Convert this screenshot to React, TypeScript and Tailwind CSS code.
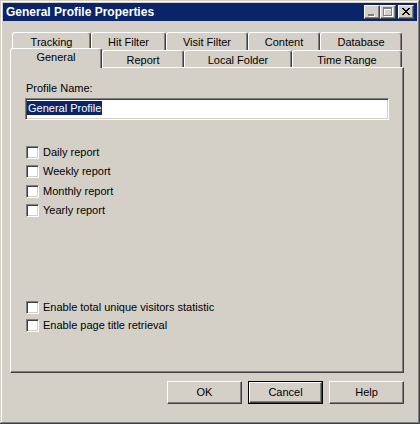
import React from "react";

const raised =
  "border border-t-white border-l-white border-r-[#404040] border-b-[#404040] shadow-[inset_-1px_-1px_0_#808080]";
const sunken =
  "border border-t-[#808080] border-l-[#808080] border-r-white border-b-white shadow-[inset_1px_1px_0_#404040,inset_-1px_-1px_0_#d4d0c8]";

const backTabs = [
  { label: "Tracking", w: "w-[79px]" },
  { label: "Hit Filter", w: "w-[75px]" },
  { label: "Visit Filter", w: "w-[82px]" },
  { label: "Content", w: "w-[72px]" },
  { label: "Database", w: "w-[82px]" },
];

const frontTabs = [
  { label: "Report", w: "w-[82px]" },
  { label: "Local Folder", w: "w-[108px]" },
  { label: "Time Range", w: "w-[110px]" },
];

function Tab({ label, w }: { label: string; w: string }) {
  return (
    <div
      className={`${w} h-full flex justify-center pt-[3px] leading-[13px] rounded-t-[3px] border-l border-t border-r border-l-white border-t-white border-r-[#404040] shadow-[inset_-1px_0_0_#808080]`}
    >
      {label}
    </div>
  );
}

function Check({ label, className = "" }: { label: string; className?: string }) {
  return (
    <div className={`flex items-center h-[13px] ${className}`}>
      <div className={`w-[13px] h-[13px] bg-white ${sunken}`} />
      <span className="ml-[4px] leading-[13px]">{label}</span>
    </div>
  );
}

function Btn({ label, isDefault }: { label: string; isDefault?: boolean }) {
  return (
    <div
      className={`w-[75px] h-[23px] ${
        isDefault ? "border border-black" : ""
      }`}
    >
      <div className={`w-full h-full flex items-center justify-center ${raised}`}>{label}</div>
    </div>
  );
}

function TitleBtn({ kind }: { kind: "min" | "max" | "close" }) {
  return (
    <div className={`w-[16px] h-[14px] bg-[#d4d0c8] ${raised} relative`}>
      <svg width="16" height="14" className="absolute -left-[1px] -top-[1px]" shapeRendering="crispEdges">
        {kind === "min" && (
          <>
            <rect x="5" y="10" width="6" height="2" fill="#fff" />
            <rect x="4" y="9" width="6" height="2" fill="#808080" />
          </>
        )}
        {kind === "max" && (
          <>
            <path d="M4 3h9v9H4z M5 5v6h7V5z" fill="#fff" fillRule="evenodd" />
            <path d="M3 2h9v9H3z M4 4v6h7V4z" fill="#808080" fillRule="evenodd" />
          </>
        )}
        {kind === "close" &&
          [0, 1, 2, 3, 4, 5, 6].map((i) => (
            <React.Fragment key={i}>
              <rect x={4 + i} y={3 + i} width="2" height="1" fill="#000" />
              <rect x={10 - i} y={3 + i} width="2" height="1" fill="#000" />
            </React.Fragment>
          ))}
      </svg>
    </div>
  );
}

export default function App() {
  return (
    <div className="w-[420px] h-[424px] bg-[#d4d0c8] p-[3px] flex flex-col shadow-[inset_-1px_-1px_0_#404040,inset_1px_1px_0_#d4d0c8,inset_-2px_-2px_0_#808080,inset_2px_2px_0_#ffffff] font-['Liberation_Sans',Arial,sans-serif] text-[11px] text-black select-none">
      {/* title bar */}
      <div className="h-[18px] bg-[#0a246a] flex items-center pl-[3px] pr-[3px]">
        <span className="text-white font-bold text-[12px] leading-[14px]">General Profile Properties</span>
        <div className="ml-auto flex">
          <TitleBtn kind="min" />
          <TitleBtn kind="max" />
          <div className="w-[2px]" />
          <TitleBtn kind="close" />
        </div>
      </div>

      <div className="pl-[7px] mt-[11px] flex flex-col">
        {/* back tab row */}
        <div className="flex h-[18px] ml-[2px]">
          {backTabs.map((t) => (
            <Tab key={t.label} {...t} />
          ))}
        </div>
        {/* front tab row */}
        <div className="flex h-[17px] ml-[2px]">
          <div className="w-[92px] -ml-[2px] -mt-[2px] -mb-[1px] relative z-10 bg-[#d4d0c8] flex justify-center pt-[2px] leading-[13px] rounded-t-[3px] border-l border-t border-r border-l-white border-t-white border-r-[#404040] shadow-[inset_-1px_0_0_#808080]">
            General
          </div>
          {frontTabs.map((t) => (
            <Tab key={t.label} {...t} />
          ))}
        </div>

        {/* panel */}
        <div className={`w-[394px] h-[306px] ${raised} pl-[14px] pt-[14px] flex flex-col`}>
          <div className="pl-[1px] leading-[13px]">Profile Name:</div>
          <div className={`mt-[3px] w-[364px] h-[22px] bg-white ${sunken} pl-[1px] pt-[1px]`}>
            <span className="inline-block bg-[#0a246a] text-white h-[14px] leading-[14px] pr-[1px] pl-[1px]">
              General Profile
            </span>
          </div>

          <div className="pl-[1px] mt-[26px] flex flex-col">
            <Check label="Daily report" />
            <Check label="Weekly report" className="mt-[6px]" />
            <Check label="Monthly report" className="mt-[7px]" />
            <Check label="Yearly report" className="mt-[6px]" />
            <Check label="Enable total unique visitors statistic" className="mt-[84px]" />
            <Check label="Enable page title retrieval" className="mt-[5px]" />
          </div>
        </div>

        {/* buttons */}
        <div className="w-[394px] mt-[8px] flex justify-end gap-[6px]">
          <Btn label="OK" />
          <Btn label="Cancel" isDefault />
          <Btn label="Help" />
        </div>
      </div>
    </div>
  );
}
